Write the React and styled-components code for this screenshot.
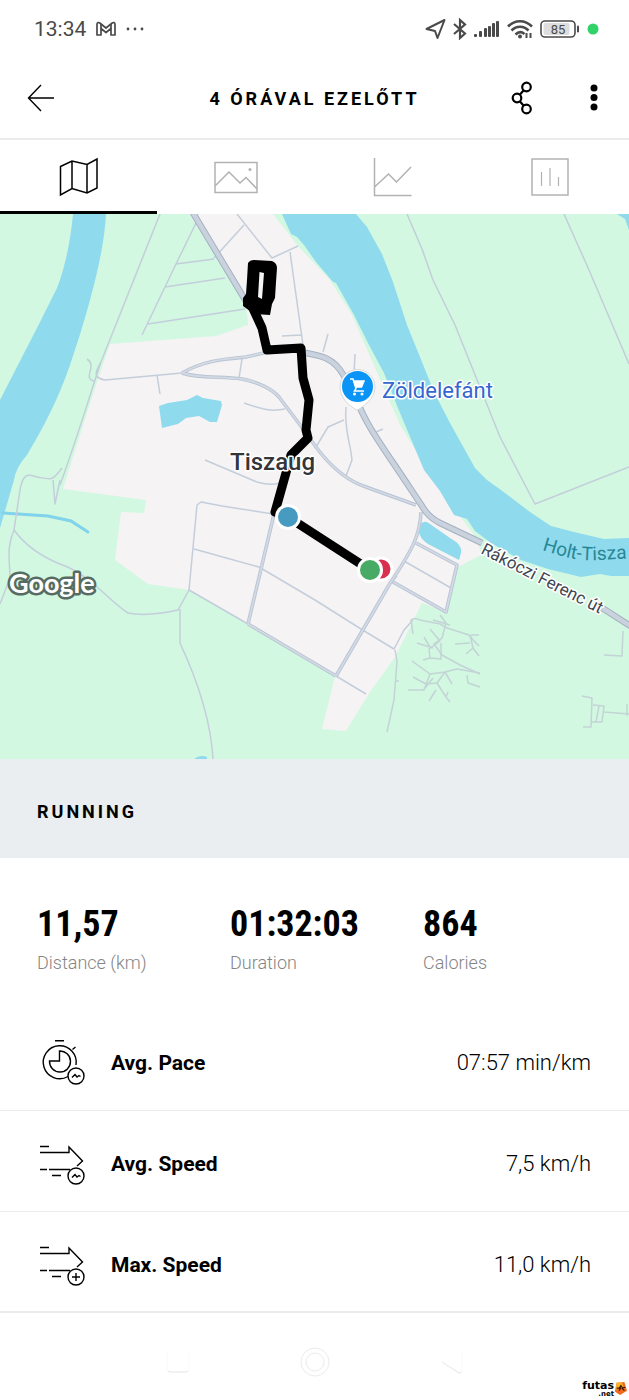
import styled, { createGlobalStyle } from "styled-components"

const colors = {
    text: "#000000",
    muted: "#858585",
    status: "#4a4a4a",
    inactive: "#b2b2b2",
    line: "#e9ebec",
    section: "#eaeef1",
    land: "#d2f8e1",
    town: "#f5f3f4",
    water: "#90daee",
    road: "#c4cedb",
    roadEdge: "#a3b1c2",
    track: "#c3d3d6",
}

const GlobalStyle = createGlobalStyle`
    * {
        box-sizing: border-box;
    }
    body {
        margin: 0;
        background-color: #fff;
        color: ${colors.text};
        font-family: Roboto, "Liberation Sans", sans-serif;
    }
    button {
        border: 0;
        padding: 0;
        background: none;
        color: inherit;
        font: inherit;
        cursor: pointer;
    }
    svg {
        display: block;
    }
`
const Screen = styled.div`
    display: flex;
    flex-direction: column;
    min-height: 100vh;
`
const StatusBar = styled.div`
    display: flex;
    justify-content: space-between;
    align-items: center;
    height: 58px;
    padding: 0 30px 0 34px;
    color: ${colors.status};
`
const StatusGroup = styled.div`
    display: flex;
    align-items: center;
    gap: ${({ $gap }) => $gap}px;
`
const Clock = styled.span`
    font-size: 21px;
    line-height: 28px;
`
const Header = styled.header`
    display: grid;
    grid-template-columns: 1fr auto 1fr;
    align-items: center;
    height: 82px;
    padding: 0 15px;
    border-bottom: 2px solid ${colors.line};
`
const Title = styled.h1`
    margin: 0;
    padding-top: 2px;
    font-size: 18px;
    font-weight: 700;
    line-height: 24px;
    letter-spacing: 3px;
`
const Actions = styled.div`
    display: flex;
    justify-content: flex-end;
    gap: 32px;
`
const IconButton = styled.button`
    display: flex;
    justify-content: center;
    align-items: center;
    width: ${({ $wide }) => ($wide ? 52 : 40)}px;
    height: 48px;
`
const Tabs = styled.nav`
    display: flex;
    height: 74px;
`
const Tab = styled.button`
    flex: 1;
    display: flex;
    justify-content: center;
    align-items: center;
    padding-top: 3px;
    color: ${({ $active }) => ($active ? colors.text : colors.inactive)};
    border-bottom: 3px solid ${({ $active }) => ($active ? colors.text : "transparent")};
`
const MapArea = styled.div`
    background-color: ${colors.land};

    svg {
        width: 100%;
        height: auto;
    }
`
const Section = styled.section`
    display: flex;
    align-items: center;
    height: 99px;
    padding: 6px 37px 0;
    background-color: ${colors.section};
`
const SectionTitle = styled.h2`
    margin: 0;
    font-size: 18px;
    font-weight: 700;
    line-height: 24px;
    letter-spacing: 3px;
`
const Stats = styled.dl`
    display: grid;
    grid-template-columns: repeat(3, 1fr);
    margin: 0;
    padding: 44px 13px 35px 37px;
`
const Stat = styled.div`
    display: flex;
    flex-direction: column-reverse;
    gap: 5px;
`
const StatLabel = styled.dt`
    font-size: 18px;
    font-weight: 300;
    line-height: 24px;
    color: ${colors.muted};
`
const StatValue = styled.dd`
    margin: 0;
    font-family: "Roboto Condensed", "Liberation Sans", sans-serif;
    font-size: 36px;
    font-weight: 700;
    line-height: 44px;
`
const Rows = styled.dl`
    margin: 0;
`
const Row = styled.div`
    display: flex;
    align-items: center;
    gap: 25px;
    height: 101px;
    padding: 6px 38px 0 40px;
    border-bottom: 1px solid ${colors.line};

    &:last-child {
        border-bottom-width: 2px;
    }
`
const RowLabel = styled.dt`
    flex: 1;
    font-size: 21px;
    font-weight: 700;
    line-height: 28px;
`
const RowValue = styled.dd`
    margin: 0;
    font-size: 22px;
    font-weight: 300;
    line-height: 28px;
`
const BottomBar = styled.footer`
    position: relative;
    flex: 1;
    display: flex;
    justify-content: center;
    align-items: center;
    gap: 107px;
    min-height: 87px;
    padding-top: 11px;
`
const NavButton = styled.button`
    width: 30px;
    height: 30px;
`
const Watermark = styled.div`
    position: absolute;
    right: 2px;
    bottom: 3px;
    display: flex;
    align-items: center;
`
const Brand = styled.span`
    display: flex;
    flex-direction: column;
    align-items: flex-end;
    font-family: "DejaVu Sans", sans-serif;
    font-size: 11px;
    font-weight: 700;
    line-height: 10px;

    small {
        font-size: 7px;
        line-height: 6px;
    }
`

const PhoneStatus = () => {
    return (
        <StatusBar>
            <StatusGroup $gap={10}>
                <Clock>13:34</Clock>
                <svg width="20" height="16" viewBox="0 0 20 16" fill="none" stroke="currentColor" strokeWidth="1.700" strokeLinejoin="round">
                    <path d="M1 14V3.200C1 1.600 2.600 1 3.800 2L10 7l6.200-5C17.400 1 19 1.600 19 3.200V14h-4V7.500l-5 4-5-4V14z" />
                    <path d="M5 7.500V3M15 7.500V3" />
                </svg>
                <svg width="18" height="4" viewBox="0 0 18 4" fill="currentColor">
                    <circle cx="2" cy="2" r="1.400" />
                    <circle cx="9" cy="2" r="1.400" />
                    <circle cx="16" cy="2" r="1.400" />
                </svg>
            </StatusGroup>
            <StatusGroup $gap={7}>
                <svg width="21" height="22" viewBox="0 0 21 22" fill="none" stroke="currentColor" strokeWidth="2" strokeLinejoin="round">
                    <path d="M1.500 11 19.500 2 12.500 20 10 13z" />
                </svg>
                <svg width="14" height="22" viewBox="0 0 14 22" fill="none" stroke="currentColor" strokeWidth="2.200">
                    <path d="M1 6l11 9.500L7 20V2l5 4.500L1 16" />
                </svg>
                <svg width="26" height="18" viewBox="0 0 26 18" fill="currentColor">
                    <rect x="0" y="14" width="3" height="3" rx="1" />
                    <rect x="5" y="11" width="3" height="6" rx="1" />
                    <rect x="10" y="8" width="3" height="9" rx="1" />
                    <rect x="14" y="6" width="3" height="11" rx="1" />
                    <rect x="18" y="3" width="3" height="14" rx="1" />
                    <rect x="22" y="1" width="3" height="16" rx="1" />
                </svg>
                <svg width="26" height="20" viewBox="0 0 26 20" fill="none" stroke="currentColor" strokeWidth="2.600">
                    <path d="M1 7.500C8 .5 18 .5 25 7.500M4.500 11.500c5-5 12-5 17 0M8.500 15.500c3-3 6-3 9-.5" />
                    <circle cx="13" cy="17.500" r="2" fill="currentColor" stroke="none" />
                    <path d="M19.500 14v5M23.500 14v5" strokeWidth="2" />
                </svg>
                <svg width="40" height="18" viewBox="0 0 40 18">
                    <rect x="1" y="1" width="34" height="16" rx="4" fill="none" stroke="currentColor" strokeWidth="1.600" />
                    <rect x="3.500" y="3" width="26" height="12" rx="2" fill="#dddddd" />
                    <path d="M38 6.500v5" stroke="currentColor" strokeWidth="2" strokeLinecap="round" />
                    <text x="18" y="13.500" fontSize="13" textAnchor="middle" fill="currentColor">85</text>
                </svg>
                <svg width="12" height="12" viewBox="0 0 12 12">
                    <circle cx="6" cy="6" r="5.500" fill="#31d267" />
                </svg>
            </StatusGroup>
        </StatusBar>
    )
}

const TabMapIcon = () => (
    <svg width="44" height="40" viewBox="0 0 44 40" fill="none" stroke="currentColor" strokeWidth="1.500">
        <path d="M3.500 9.500 15 4l15 3.500L40 2v29l-10 5-15-4.500L3.500 38zM15 4v27.500M30 7.500V36" />
    </svg>
)

const TabPhotoIcon = () => (
    <svg width="44" height="40" viewBox="0 0 44 40" fill="none" stroke="currentColor" strokeWidth="1.500">
        <rect x="1" y="5.500" width="42" height="30" />
        <path d="M1 29 15 15l11 11 6-5.500L43 32" />
        <circle cx="36" cy="12.500" r="1.500" fill="currentColor" stroke="none" />
    </svg>
)

const TabChartIcon = () => (
    <svg width="44" height="40" viewBox="0 0 44 40" fill="none" stroke="currentColor" strokeWidth="1.500">
        <path d="M3.500 1v37.500h37M3.500 30l14-13 8 8L40 10" />
    </svg>
)

const TabBarsIcon = () => (
    <svg width="44" height="40" viewBox="0 0 44 40" fill="none" stroke="currentColor" strokeWidth="1.500">
        <rect x="4" y="2" width="36" height="36" />
        <path d="M13.500 15v14M22 11v18M30.500 20v9" strokeWidth="1.200" />
    </svg>
)

const tabs = [
    { name: "Map", Icon: TabMapIcon, active: true },
    { name: "Photos", Icon: TabPhotoIcon },
    { name: "Charts", Icon: TabChartIcon },
    { name: "Splits", Icon: TabBarsIcon },
]

const mainRoad = "M190 208 247 303M298 352C322 355 334 358 344 376L357 400C365 424 385 450 410 488L422 506Q428 517 440 523L482 543M596 604 632 627"

const streets = [
    "M182 373C205 360 225 359 246 357L268 352M182 373C200 379 222 376 242 379C258 382 272 389 279 397C290 412 300 424 316 447C330 466 345 480 366 487L416 505",
    "M274 514 248 624M248 624 336 676M421 512C420 535 413 549 389 585L336 676M416 543 457 565 446 612 393 582",
]

const lanes = [
    "M273 514 222 506 201 502 197 505 189 590M194 549 259 567 315 600 361 629 394 649 404 630 413 620",
    "M189 590 248 624M336 676 366 694M404 561 451 588M397 576 389 585",
    "M214 258 244 225M237 214 272 258 298 246M290 252 303 345M282 336 302 335",
    "M182 373 105 380C94 378 94 374 101 362L160 214M101 362C92 388 78 436 60 485M157 375 160 394M242 359 239 378",
    "M198 219 176 264 142 335M176 264 214 259M165 287 225 278M148 324 245 309",
    "M87 359C98 366 82 378 94 381M20 490C23 471 30 475 37 477 53 480 52 481 62 468M20 490 14 530M53 480 55 504 60 480",
    "M14 530C6 548 10 562 10 578L0 604M14 530C25 545 40 556 60 564 90 574 110 602 128 613 143 616 160 614 178 610L189 590M180 609V643C200 686 211 724 213 759",
    "M244 403C262 409 270 412 285 409M205 460 257 482Q270 486 280 483",
    "M323 352 328 334M354 374 355 354M346 407C344 430 350 440 352 460L346 476M316 447 328 427 344 420M376 432 383 429",
    "M407 214 422 249 433 280 455 325 500 437 535 504 629 467M564 214 589 270 629 364",
]

const tracks = [
    "M395 650 397 661 394 700 387 732M396 681h3M413 634 411 620Q414 617 420 620L440 624 447 628 469 635 474 641 479 646",
    "M433 620 450 625M440 615 446 623 442 638 434 644 442 655 460 665 480 674M417 643 433 648M424 637 430 647",
    "M430 629 440 641 429 649 430 658 441 659 441 643M430 658 423 660M471 635h8M455 644 470 643M470 635 473 648 466 654M473 648 479 656",
    "M412 661 430 674 445 672 457 669 480 673M445 672 437 683 426 684 413 677M430 674 424 690 408 690M437 683 446 697 450 702M436 690 429 701M446 697 448 692M467 675 468 683 480 687M445 672 452 684M433 678 425 688",
    "M604 655 622 656 623 631M582 696 592 698 591 727 583 727M593 705 604 706 602 722 592 722M599 706 596 722M604 712 629 714M627 704V716",
]

const ActivityMap = () => {
    return (
        <MapArea>
            <svg viewBox="0 214 629 545" role="img" aria-label="Running route in Tiszaug" fontFamily="Roboto, Liberation Sans, sans-serif">
                <path
                    fill={colors.town}
                    d="M189 214H273L298 246 330 280 352 315 400 425 440 490 478 540 481 555 458 567 447 612 422 603 395 657 370 692 346 731 322 729 335 676 248 624 190 590 148 584 115 560 121 512 144 513 146 500 63 489 75 451 95 388 110 344 216 336 248 325 246 302z"
                />
                <g fill={colors.water}>
                    <path d="M73 214C70 248 62 276 57 288L38 326 0 400V528L14 480Q16 467 27 455C43 428 58 400 70 365 82 330 104 260 106 214z" />
                    <path d="M282 214 291 234 297 237 304 245 316 262 333 282 336 283 354 315 369 345 384 373 400 413 424 470 440 491 454 515 467 519 475 531 491 543 521 560 548 569 581 577 600 574 611 576H629V538L604 539 574 532 551 526 530 512 501 490 487 480 475 468 450 423 434 392 430 382 420 357 407 325 393 282 382 254 367 227 356 214z" />
                    <path d="M617 214 625 219 629 230V214z" />
                    <path d="M159 406 168 403 187 400 197 395 203 398 221 401 222 405 217 422 210 422 199 416 186 418 178 424 162 428z" />
                    <path d="M420 525Q424 519 430 524L450 538Q463 545 461 553L459 560 428 544Q416 536 420 525z" />
                    <path d="M194 759Q200 754 207 757L207 759z" />
                </g>
                <path d="M3 513 48 516 71 521 88 532" fill="none" stroke="#80d3ea" strokeWidth="3" strokeLinecap="round" />
                <g fill="none" strokeLinejoin="round">
                    {tracks.map((d) => (
                        <path key={d} d={d} stroke={colors.track} strokeWidth="1.500" />
                    ))}
                    {lanes.map((d) => (
                        <path key={d} d={d} stroke={colors.road} strokeWidth="1.500" />
                    ))}
                    {streets.map((d) => (
                        <path key={d} d={d} stroke="#b7c3d2" strokeWidth="3.500" />
                    ))}
                    {streets.map((d) => (
                        <path key={d} d={d} stroke="#d3dae5" strokeWidth="1.800" />
                    ))}
                    <path d={mainRoad} stroke={colors.roadEdge} strokeWidth="6.500" />
                    <path d={mainRoad} stroke="#c9d2dd" strokeWidth="4.500" />
                </g>
                <path
                    fill="none"
                    stroke="#000"
                    strokeWidth="9"
                    strokeLinejoin="round"
                    strokeLinecap="round"
                    d="M250 302 262 328 267 350 301 348 303 378 309 400 306 430 308 438 291 455 275 512 288 517 370 570"
                />
                <path
                    fillRule="evenodd"
                    d="M248 263Q250 260 254 260L272 261Q277 263 277 268L276 282 275 298 272 304 270 315 254 314 243 306 243 298 246 294 247 280zM259.500 272 258 297 262 299 264 273z"
                />
                <g stroke="#fff" strokeWidth="3">
                    <circle cx="288" cy="517" r="11.500" fill="#479ac0" />
                    <circle cx="381" cy="569" r="11" fill="#d9304e" />
                    <circle cx="370" cy="570" r="11.500" fill="#47aa65" />
                </g>
                <path fill="#fff" stroke="#d5dadd" strokeWidth="1" d="M357 410C351 407 340 399 340 387A17.500 17.500 0 0 1 375 387C375 399 363 407 357 410z" />
                <circle cx="357.500" cy="386.500" r="15.500" fill="#0a94f5" />
                <g fill="none" stroke="#fff" strokeWidth="1.500">
                    <path d="M350 379h3l3 9.500-1.500 2.500h9.500" />
                    <path d="M354 381h10l-2.500 6H356z" fill="#fff" />
                </g>
                <circle cx="354.500" cy="394" r="1.500" fill="#fff" />
                <circle cx="362" cy="394" r="1.500" fill="#fff" />
                <g paintOrder="stroke" stroke="#fff" strokeWidth="3" strokeLinejoin="round">
                    <text x="382" y="398" fontSize="22" fill="#3566cf">Zöldelefánt</text>
                    <text x="230" y="470" fontSize="24" fontWeight="500" fill="#333539">Tiszaug</text>
                    <text transform="translate(480 553) rotate(27)" fontSize="17" fill="#3f4650">Rákóczi Ferenc út</text>
                </g>
                <path id="river" d="M542 550C560 555 575 562 600 560S630 559 660 556" fill="none" />
                <text fontSize="19" fill="#268895">
                    <textPath href="#river">Holt-Tisza</textPath>
                </text>
                <text
                    x="9"
                    y="593"
                    fontFamily="Lato, sans-serif"
                    fontSize="27"
                    fontWeight="700"
                    fill="#fff"
                    stroke="#566b62"
                    strokeWidth="5"
                    strokeLinejoin="round"
                    paintOrder="stroke"
                >
                    Google
                </text>
            </svg>
        </MapArea>
    )
}

const Badge = ({ children }) => (
    <>
        <circle cx="36" cy="37" r="8" />
        {children}
    </>
)

const wave = <path d="M32 38.500l3-3 2 2.500 2-1.500 1.500 1" />
const plus = <path d="M32 37h8M36 33v8" />

const PaceIcon = () => (
    <svg width="46" height="46" viewBox="0 1 46 46" fill="none" stroke="currentColor" strokeWidth="1.400">
        <path d="M15 1.800h9M32.500 10.500 35.500 8M28 37.500A16.500 16.500 0 1 1 36 26" />
        <path d="M19.500 12v10H9.500A10.500 10.500 0 1 0 19.500 12z" />
        <Badge>{wave}</Badge>
    </svg>
)

const SpeedIcon = ({ mark }) => (
    <svg width="46" height="46" viewBox="0 2 46 46" fill="none" stroke="currentColor" strokeWidth="1.400">
        <path d="M0 7.500h9M0 13.500h29V8L42.500 22 37 27M0 30.500h7M9 30.500h21M12 36.500h9" />
        <Badge>{mark}</Badge>
    </svg>
)

const PhoneNav = () => (
    <>
        <NavButton aria-label="Recent apps">
            <svg width="30" height="30" viewBox="0 0 30 30" fill="none">
                <path d="M4 5v17q0 3 3 3h16q3 0 3-3V5" stroke="#fafafa" />
                <path d="M5 24q1 1 3 1h14q2 0 3-1" stroke="#e6e6e6" />
            </svg>
        </NavButton>
        <NavButton aria-label="Home">
            <svg width="30" height="30" viewBox="0 0 30 30" fill="none" stroke="#ebebeb">
                <circle cx="15" cy="15" r="14" />
                <circle cx="15" cy="15" r="9" />
            </svg>
        </NavButton>
        <NavButton aria-label="Back to previous screen">
            <svg width="30" height="30" viewBox="0 0 30 30" fill="none" stroke="#e6e6e6">
                <path d="M5 15 22 26 25 25" />
                <path d="M25 25V5" stroke="#fafafa" />
            </svg>
        </NavButton>
    </>
)

const stats = [
    { label: "Distance (km)", value: "11,57" },
    { label: "Duration", value: "01:32:03" },
    { label: "Calories", value: "864" },
]

const details = [
    { label: "Avg. Pace", value: "07:57 min/km", icon: <PaceIcon /> },
    { label: "Avg. Speed", value: "7,5 km/h", icon: <SpeedIcon mark={wave} /> },
    { label: "Max. Speed", value: "11,0 km/h", icon: <SpeedIcon mark={plus} /> },
]

const App = () => {
    return (
        <Screen>
            <GlobalStyle />
            <PhoneStatus />
            <Header>
                <IconButton $wide aria-label="Back">
                    <svg width="28" height="28" viewBox="0 0 28 28" fill="none" stroke="currentColor" strokeWidth="1.400">
                        <path d="M14 1 1.500 14 14 27M1.500 14H27" />
                    </svg>
                </IconButton>
                <Title>4 ÓRÁVAL EZELŐTT</Title>
                <Actions>
                    <IconButton aria-label="Share">
                        <svg width="22" height="34" viewBox="0 0 22 34" fill="none" stroke="currentColor" strokeWidth="2.200">
                            <circle cx="15.500" cy="6" r="4.300" />
                            <circle cx="6" cy="17" r="4.300" />
                            <circle cx="15.500" cy="28" r="4.300" />
                            <path d="M12.500 9.500 9 13.500M9 20.500l3.500 4" />
                        </svg>
                    </IconButton>
                    <IconButton aria-label="More">
                        <svg width="8" height="28" viewBox="0 0 8 28" fill="currentColor">
                            <circle cx="4" cy="4" r="3.500" />
                            <circle cx="4" cy="13.500" r="3.500" />
                            <circle cx="4" cy="23" r="3.500" />
                        </svg>
                    </IconButton>
                </Actions>
            </Header>
            <Tabs>
                {tabs.map(({ name, Icon, active }) => (
                    <Tab key={name} $active={active} aria-label={name}>
                        <Icon />
                    </Tab>
                ))}
            </Tabs>
            <ActivityMap />
            <Section>
                <SectionTitle>RUNNING</SectionTitle>
            </Section>
            <Stats>
                {stats.map(({ label, value }) => (
                    <Stat key={label}>
                        <StatLabel>{label}</StatLabel>
                        <StatValue>{value}</StatValue>
                    </Stat>
                ))}
            </Stats>
            <Rows>
                {details.map(({ label, value, icon }) => (
                    <Row key={label}>
                        {icon}
                        <RowLabel>{label}</RowLabel>
                        <RowValue>{value}</RowValue>
                    </Row>
                ))}
            </Rows>
            <BottomBar>
                <PhoneNav />
                <Watermark>
                    <Brand>
                        futas
                        <small>.net</small>
                    </Brand>
                    <svg width="13" height="17" viewBox="0 0 15 17">
                        <path d="M3 2 12 1l3 10-8 5-6-4z" fill="#f26a1b" />
                        <path d="M3 2 9 1l2 6-9 3z" fill="#fdb52a" />
                        <path d="M3 8h3l2-3 2 3 3-1M8 7l-2 4M9 8l3 3" stroke="#3a1606" strokeWidth="1.300" fill="none" />
                    </svg>
                </Watermark>
            </BottomBar>
        </Screen>
    )
}

export default App
